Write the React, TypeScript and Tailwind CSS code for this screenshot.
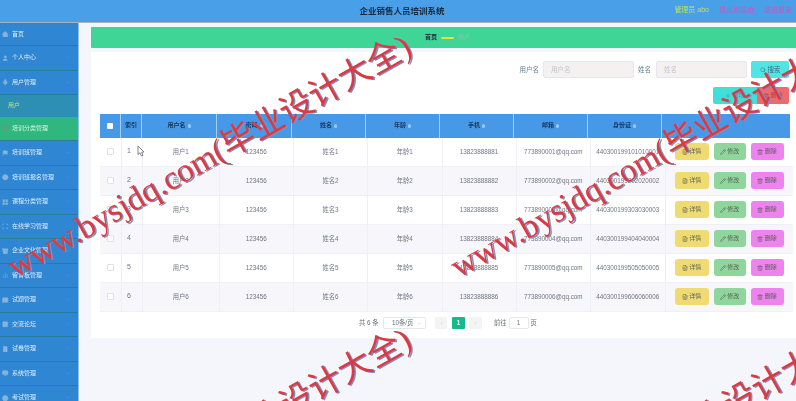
import React from 'react';
import { Home, User, Mic, ChevronDown, ChevronUp, ShoppingBag, Flag, Clock, LayoutGrid, Scan, Archive, BarChart2, MessageSquare, Image, Smartphone, Monitor, Globe, Search, Plus, Trash2, FileText, Pencil, ChevronLeft, ChevronRight } from 'lucide-react';

const menu = [
  { label: '首页', icon: Home },
  { label: '个人中心', icon: User, arrow: true },
  { label: '用户管理', icon: Mic, open: true },
  { label: '培训分类管理', icon: ShoppingBag, arrow: true, active: true },
  { label: '培训班管理', icon: Flag, arrow: true },
  { label: '培训班报名管理', icon: Clock, arrow: true },
  { label: '课程分类管理', icon: LayoutGrid, arrow: true },
  { label: '在线学习管理', icon: Scan, arrow: true },
  { label: '企业文化管理', icon: Archive, arrow: true },
  { label: '留言板管理', icon: BarChart2, arrow: true },
  { label: '试题管理', icon: MessageSquare, arrow: true },
  { label: '交流论坛', icon: Image, arrow: true },
  { label: '试卷管理', icon: Smartphone, arrow: true },
  { label: '系统管理', icon: Monitor, arrow: true },
  { label: '考试管理', icon: Globe, arrow: true },
];

const headers = ['索引', '用户名', '密码', '姓名', '年龄', '手机', '邮箱', '身份证'];

const rows = [1, 2, 3, 4, 5, 6].map(n => ({
  n,
  phone: `1382388888${n}`,
  mail: `77389000${n}@qq.com`,
  idCard: `440300199${n}0${n}0${n}000${n}`,
}));

const Watermark = ({ className }: { className: string }) => (
  <div className={`absolute whitespace-nowrap origin-left -rotate-[29.5deg] text-[33.5px] leading-none text-[#dc3a40] [text-shadow:1px_1.5px_0_#7f8fc0] ${className}`}>
    www.bysjdq.com(毕业设计大全)
  </div>
);

export default function App() {
  return (
    <div className="relative w-[796px] h-[401px] overflow-hidden bg-[#f5f6fb] text-[6.3px] font-['Liberation_Sans','Noto_Sans_CJK_SC',sans-serif] blur-[0.35px]">
      <header className="h-[23px] bg-[#4a9fe9] border-b border-[#a9b2bc] flex items-center relative">
        <div className="flex-1 pl-[8px] text-center font-bold text-[8.5px] text-[#16293f]">企业销售人员培训系统</div>
        <div className="absolute right-[4px] top-[5px] flex items-center gap-[10px] text-[7px]">
          <span className="text-[#bde05e]">管理员 abo</span>
          <span className="text-[#c05cb4]">退出到前台</span>
          <span className="text-[#c05cb4]">退出登录</span>
        </div>
      </header>

      <div className="flex h-[378px]">
        <aside className="w-[79px] shrink-0 bg-[#2f86d2] border-r border-[#8fc0e8] overflow-hidden">
          {menu.map((item, i) => (
            <React.Fragment key={item.label}>
              <div className={`${i === 0 ? 'h-[23px]' : 'h-[24.5px]'} flex items-center pl-[2px] pr-[7px] border-b border-[#2a7c9e] text-[6px] ${item.active ? 'bg-[#2eb87f] text-[#d8f0e4]' : 'text-[#dcecf8]'}`}>
                <item.icon className={`w-[6.5px] h-[6.5px] mr-[3.5px] ${item.active ? 'text-[#5f9d8a] fill-[#5f9d8a]' : 'text-[#86b4da] fill-[#86b4da]'}`} />
                <span className="flex-1">{item.label}</span>
                {item.arrow && <ChevronDown className="w-[5px] h-[5px] text-[#5f9fd8]" />}
                {item.open && <ChevronUp className="w-[5px] h-[5px] text-[#5f9fd8]" />}
              </div>
              {item.open && (
                <div className="h-[21.5px] flex items-center pl-[8px] bg-[#2d8fb4] text-[#b9e66e] text-[6px]">用户</div>
              )}
            </React.Fragment>
          ))}
        </aside>

        <main className="flex-1 min-w-0 pl-[12px] pt-[4px]">
          <div className="h-[21px] bg-[#3fd596] rounded-l-[1px] flex items-center pl-[334px] gap-[4px] text-[6px]">
            <span className="font-bold text-[#16293f]">首页</span>
            <span className="w-[13px] h-[2px] bg-[#e6dc4e] rounded-full"></span>
            <span className="text-[#7fc9b2]">用户</span>
          </div>

          <section className="mt-[4px] h-[286px] bg-white pl-[9px] pr-[5px] pt-[9px]">
            <div className="flex justify-end items-center pr-[2px] h-[17px] text-[#5d7f93] text-[6.5px]">
              <span className="mr-[4px]">用户名</span>
              <div className="w-[91px] h-[17px] bg-[#f6f1f1] border border-[#e4e7ed] rounded-[2px] pl-[7px] flex items-center text-[#c0c4cc]">用户名</div>
              <span className="ml-[4px] mr-[5px]">姓名</span>
              <div className="w-[91px] h-[17px] bg-[#f6f1f1] border border-[#e4e7ed] rounded-[2px] pl-[7px] flex items-center text-[#c0c4cc]">姓名</div>
              <button className="ml-[4px] w-[38px] h-[17px] bg-[#52e3e3] rounded-[2px] flex items-center justify-center gap-[2px] text-[#3c6f7c]">
                <Search className="w-[6px] h-[6px]" />搜索
              </button>
            </div>
            <div className="flex justify-end mt-[9px] pr-[2px] h-[17px] text-[6px]">
              <button className="w-[44px] bg-[#40e0d8] rounded-l-[2px] flex items-center justify-center gap-[1px] text-[#4a8fb0]">
                <Plus className="w-[6px] h-[6px]" />新增
              </button>
              <button className="w-[32px] bg-[#ef6a6a] rounded-r-[2px] flex items-center justify-center gap-[1px] text-[#a04a50]">
                <Trash2 className="w-[6px] h-[6px]" />删除
              </button>
            </div>

            <div className="mt-[10px]">
              <div className="h-[23.5px] w-[690px] grid grid-cols-[21px_21px_75px_75px_74px_74px_74px_74px_74px_128px] bg-[#4798e6] font-bold text-[#17375c] text-[6px]">
                <div className="flex items-center justify-center border-r border-[#a6cdf2]">
                  <span className="w-[6.5px] h-[6.5px] bg-white rounded-[1px]"></span>
                </div>
                {headers.map((h, i) => (
                  <div key={h} className="flex items-center justify-center gap-[2px] border-r border-[#a6cdf2]">
                    {h}
                    {i > 0 && <span className="w-[3px] h-[4px] rounded-full bg-[#9cc6ee]"></span>}
                  </div>
                ))}
                <div></div>
              </div>

              {rows.map(r => (
                <div key={r.n} className={`h-[29px] w-[693px] grid grid-cols-[22px_21px_76.5px_74.5px_74px_74.5px_74px_74.5px_74.5px_127.5px] border-b border-[#f0f1f6] text-[#727680] ${r.n % 2 === 0 ? 'bg-[#f6f6fb]' : 'bg-white'}`}>
                  <div className="flex items-center justify-center border-r border-[#eff0f5]">
                    <span className="w-[6.5px] h-[6.5px] bg-white border border-[#dfe2e8] rounded-[1px]"></span>
                  </div>
                  <div className="flex items-center pl-[5px] border-r border-[#eff0f5] text-[7px]">{r.n}</div>
                  <div className="flex items-center justify-center border-r border-[#eff0f5]">用户{r.n}</div>
                  <div className="flex items-center justify-center border-r border-[#eff0f5]">123456</div>
                  <div className="flex items-center justify-center border-r border-[#eff0f5]">姓名{r.n}</div>
                  <div className="flex items-center justify-center border-r border-[#eff0f5]">年龄{r.n}</div>
                  <div className="flex items-center justify-center border-r border-[#eff0f5]">{r.phone}</div>
                  <div className="flex items-center justify-center border-r border-[#eff0f5]">{r.mail}</div>
                  <div className="flex items-center justify-center border-r border-[#eff0f5]">{r.idCard}</div>
                  <div className="flex items-center pl-[9px] gap-[5px] text-[#5c6258] text-[6px]">
                    <button className="w-[34px] h-[17px] bg-[#f0db72] rounded-[3px] flex items-center justify-center gap-[1.5px]"><FileText className="w-[6px] h-[6px]" />详情</button>
                    <button className="w-[32px] h-[17px] bg-[#8fd69c] rounded-[3px] flex items-center justify-center gap-[1.5px]"><Pencil className="w-[6px] h-[6px]" />修改</button>
                    <button className="w-[33px] h-[17px] bg-[#ee82ee] rounded-[3px] flex items-center justify-center gap-[1.5px]"><Trash2 className="w-[6px] h-[6px]" />删除</button>
                  </div>
                </div>
              ))}
            </div>

            <div className="mt-[5px] flex items-center h-[13px] pl-[259px] text-[#6b7078]">
              <span className="w-[18px] whitespace-nowrap">共 6 条</span>
              <div className="ml-[6px] w-[43px] h-[12px] border border-[#e4e7ed] rounded-[2px] flex items-center justify-between pl-[8px] pr-[3px]">
                10条/页<ChevronDown className="w-[5px] h-[5px] text-[#c0c4cc]" />
              </div>
              <span className="ml-[9px] w-[12px] h-[12px] bg-[#f4f4f5] rounded-[1px] flex items-center justify-center text-[#b8bcc4]"><ChevronLeft className="w-[5px] h-[5px]" /></span>
              <span className="ml-[5px] w-[13px] h-[12px] bg-[#14b98c] rounded-[1px] flex items-center justify-center text-white font-bold">1</span>
              <span className="ml-[4px] w-[13px] h-[12px] bg-[#f4f4f5] rounded-[1px] flex items-center justify-center text-[#b8bcc4]"><ChevronRight className="w-[5px] h-[5px]" /></span>
              <span className="ml-[12px]">前往</span>
              <div className="ml-[2px] w-[20px] h-[12px] border border-[#e4e7ed] rounded-[2px] flex items-center justify-center">1</div>
              <span className="ml-[2px]">页</span>
            </div>
          </section>
        </main>
      </div>

      <svg className="absolute left-[137px] top-[145px] w-[8px] h-[12px]" viewBox="0 0 8 12">
        <path d="M1 1 L1 9.5 L3 7.8 L4.5 11 L6 10.3 L4.6 7.2 L7 7 Z" fill="#fff" stroke="#555" strokeWidth="0.7" />
      </svg>

      <div className="absolute inset-0 overflow-hidden pointer-events-none font-['Liberation_Serif','Noto_Sans_CJK_SC',serif]">
        <Watermark className="left-[10px] top-[252px]" />
        <Watermark className="left-[453px] top-[252px]" />
        <Watermark className="left-[10px] top-[545px]" />
        <Watermark className="left-[453px] top-[545px]" />
      </div>
    </div>
  );
}
